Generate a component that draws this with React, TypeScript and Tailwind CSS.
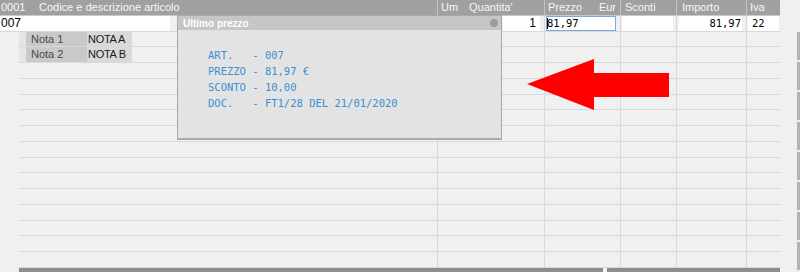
import React from "react"

const cols = [
  { w: "w-[418px]", first: true },
  { w: "w-[107px]" },
  { w: "w-[76px]" },
  { w: "w-[56px]" },
  { w: "w-[70px]" },
  { w: "w-[34px]" },
]

function EmptyRow() {
  return (
    <div className="flex h-[15.75px] shrink-0">
      <div className="w-[19px]" />
      <div className="flex border-b border-[#d9d9d9]">
        {cols.map((c, i) => (
          <div key={i} className={`${c.w} h-full ${i > 0 ? "border-l border-[#d9d9d9]" : ""}`} />
        ))}
      </div>
    </div>
  )
}

function NotaRow({ label, value }: { label: string; value: string }) {
  return (
    <div className="flex h-[15.75px] shrink-0">
      <div className="w-[19px]" />
      <div className="flex border-b border-[#d9d9d9]">
        <div className="w-[418px] flex h-full">
          <div className="w-[7px] bg-[#e4e4e4]" />
          <div className="w-[61px] bg-[#c9c9c9] pl-[5px] text-[11px] leading-[15px] text-[#4a4a4a]">{label}</div>
          <div className="w-[45px] bg-[#d9d9d9] pl-[1px] text-[11px] leading-[15px] tracking-[-0.3px] text-[#1a1a1a]">{value}</div>
        </div>
        {cols.slice(1).map((c, i) => (
          <div key={i} className={`${c.w} h-full border-l border-[#d9d9d9]`} />
        ))}
      </div>
    </div>
  )
}

export default function App() {
  const mono = "font-['DejaVu_Sans_Mono',monospace]"
  return (
    <div className="relative flex h-[272px] w-[800px] overflow-hidden bg-[#f0f0f0] font-['Liberation_Sans',Arial,sans-serif]">
      <div className="flex w-[780px] flex-col">
        {/* header */}
        <div className="flex h-[15.75px] shrink-0 border-b border-[#c9c9c9] bg-[#a0a0a0] text-[11px] leading-[14px] text-[#f7f7f7]">
          <div className="flex w-[437px] pl-[1px]">
            <span className="w-[38px]">0001</span>
            <span>Codice e descrizione articolo</span>
          </div>
          <div className="flex w-[107px] border-l border-[#c4c4c4] pl-[3px]">
            <span className="w-[28px]">Um</span>
            <span>Quantita'</span>
          </div>
          <div className="flex w-[76px] justify-between border-l border-[#c4c4c4] pl-[3px] pr-[4px]">
            <span>Prezzo</span>
            <span>Eur</span>
          </div>
          <div className="w-[56px] border-l border-[#c4c4c4] pl-[4px]">Sconti</div>
          <div className="w-[70px] border-l border-[#c4c4c4] pl-[5px]">Importo</div>
          <div className="w-[34px] border-l border-[#c4c4c4] pl-[3px]">Iva</div>
        </div>

        {/* input row */}
        <div className="flex h-[15.75px] shrink-0 border-b border-[#d9d9d9] text-[12px] leading-[15px] text-black">
          <div className="w-[437px]">
            <div className="h-[15px] w-[170px] bg-white pl-[1px]">007</div>
          </div>
          <div className="flex w-[107px] justify-end border-l border-[#d9d9d9] pr-[4px]">
            <div className="h-[15px] w-[37px] bg-white pr-[4px] text-right">1</div>
          </div>
          <div className="w-[76px] border-l border-[#d9d9d9] pl-[1px]">
            <div className={`flex h-[15px] w-[70px] items-center border border-[#7ba9dc] bg-white text-[10.5px] ${mono}`}>
              <span className="h-[11px] w-[1px] bg-black" />
              <span className="-ml-[1px]">81,97</span>
            </div>
          </div>
          <div className="w-[56px] border-l border-[#d9d9d9] pl-[1px]">
            <div className="h-[15px] w-[51px] bg-white" />
          </div>
          <div className="w-[70px] border-l border-[#d9d9d9] pl-[2px]">
            <div className={`h-[15px] w-[63px] bg-white pr-[1px] text-right text-[10.5px] ${mono}`}>81,97</div>
          </div>
          <div className="w-[34px] border-l border-[#d9d9d9] pl-[1px]">
            <div className={`h-[15px] w-[31px] bg-white pl-[4px] text-[10.5px] ${mono}`}>22</div>
          </div>
        </div>

        <NotaRow label="Nota 1" value="NOTA A" />
        <NotaRow label="Nota 2" value="NOTA B" />
        {Array.from({ length: 13 }).map((_, i) => (
          <EmptyRow key={i} />
        ))}

        {/* bottom bar */}
        <div className="flex flex-1 pl-[19px]">
          <div className="w-[584px] bg-[#8e8e8e]" />
          <div className="w-[4px] bg-[#f4f4f4]" />
          <div className="flex-1 bg-[#8e8e8e]" />
        </div>
      </div>

      {/* right side buttons edge */}
      <div className="flex flex-1 flex-col items-end gap-[2px] pt-[32px]">
        {Array.from({ length: 8 }).map((_, i) => (
          <div key={i} className="h-[28px] w-[3px] bg-[#b4b4b4]" />
        ))}
      </div>

      {/* popup */}
      <div className="absolute left-[177px] top-[15px] h-[125px] w-[325px] border border-b-2 border-[#a9a9a9] bg-[#e3e3e3]">
        <div className="flex h-[14px] items-center justify-between bg-[#c6c6c6] pl-[5px] pr-[3px]">
          <span className="text-[10px] font-bold text-white">Ultimo prezzo</span>
          <span className="h-[8px] w-[8px] rounded-full bg-[#9c9c9c]" />
        </div>
        <div className={`whitespace-pre pl-[30px] pt-[17px] text-[10.5px] leading-[16px] text-[#3a8fd0] ${mono}`}>
          <div>ART.   - 007</div>
          <div>PREZZO - 81,97 €</div>
          <div>SCONTO - 10,00</div>
          <div>DOC.   - FT1/28 DEL 21/01/2020</div>
        </div>
      </div>

      {/* red arrow */}
      <svg className="absolute left-0 top-0" width="800" height="272" viewBox="0 0 800 272">
        <polygon points="527,84 594,59 594,73 669,73 669,97 594,97 594,110" fill="#ff0000" />
      </svg>
    </div>
  )
}
